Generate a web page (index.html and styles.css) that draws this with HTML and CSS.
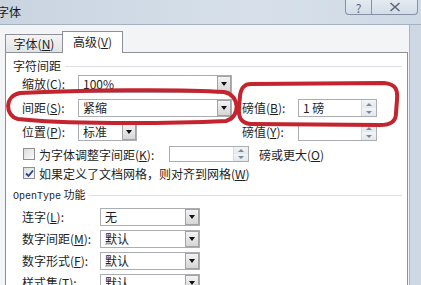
FILE: index.html
```html
<!DOCTYPE html>
<html lang="zh-CN">
<head>
<meta charset="UTF-8">
<title>字体</title>
<link rel="stylesheet" href="styles.css">
</head>
<body>
<div class="window">
  <div class="titlebar">
    <span class="title">字体</span>
    <div class="caption">
      <div class="cap-btn help">?</div>
      <div class="cap-btn close">
        <svg width="12" height="10" viewBox="0 0 12 10"><path d="M1.5 1 L10.5 9 M10.5 1 L1.5 9" stroke="#5c6778" stroke-width="1.6" fill="none"/></svg>
      </div>
    </div>
  </div>

  <div class="client">
    <div class="tabs">
      <div class="tab">字体(<u>N</u>)</div>
      <div class="tab active">高级(<u>V</u>)</div>
    </div>

    <div class="panel">
      <div class="group-head"><span>字符间距</span></div>

      <div class="spacing-grid">
        <div class="lbl">缩放(<u>C</u>):</div>
        <div class="combo"><span class="combo-text">100%</span><span class="combo-arrow"></span></div>
        <div></div><div></div><div></div>

        <div class="lbl">间距(<u>S</u>):</div>
        <div class="combo"><span class="combo-text">紧缩</span><span class="combo-arrow"></span></div>
        <div></div>
        <div class="lbl">磅值(<u>B</u>):</div>
        <div class="spin"><span class="spin-text">1 磅</span><span class="spin-btns"><i class="up"></i><i class="down"></i></span></div>

        <div class="lbl">位置(<u>P</u>):</div>
        <div class="combo short"><span class="combo-text">标准</span><span class="combo-arrow"></span></div>
        <div></div>
        <div class="lbl">磅值(<u>Y</u>):</div>
        <div class="spin"><span class="spin-text"></span><span class="spin-btns"><i class="up"></i><i class="down"></i></span></div>
      </div>

      <div class="check-row first">
        <span class="checkbox"></span>
        <span class="check-lbl">为字体调整字间距(<u>K</u>):</span>
        <div class="spin small"><span class="spin-text"></span><span class="spin-btns"><i class="up"></i><i class="down"></i></span></div>
        <span class="after">磅或更大(<u>O</u>)</span>
      </div>
      <div class="check-row">
        <span class="checkbox checked">
          <svg width="9" height="9" viewBox="0 0 9 9"><path d="M1 4.5 L3.5 7 L8 1.5" stroke="#25418a" stroke-width="1.8" fill="none"/></svg>
        </span>
        <span>如果定义了文档网格，则对齐到网格(<u>W</u>)</span>
      </div>

      <div class="group-head open"><span><b class="mono">OpenType</b> 功能</span></div>

      <div class="feature-grid">
        <div class="lbl">连字(<u>L</u>):</div>
        <div class="combo"><span class="combo-text">无</span><span class="combo-arrow"></span></div>
        <div class="lbl">数字间距(<u>M</u>):</div>
        <div class="combo"><span class="combo-text">默认</span><span class="combo-arrow"></span></div>
        <div class="lbl">数字形式(<u>F</u>):</div>
        <div class="combo"><span class="combo-text">默认</span><span class="combo-arrow"></span></div>
        <div class="lbl">样式集(<u>T</u>):</div>
        <div class="combo"><span class="combo-text">默认</span><span class="combo-arrow"></span></div>
      </div>
    </div>
  </div>

  <!-- red hand-drawn marks over the dialog -->
  <svg class="marks" width="421" height="285" viewBox="0 0 421 285">
    <path d="M20 93 C80 90 180 89 224 92 C240 95 241 117 226 121 C160 124 60 124 18 119 C5 116 4 96 20 93 Z" stroke="#c3242e" stroke-width="4" fill="none"/>
    <path d="M251 84 L384 83 C396 84 398 90 397 100 L396 113 C396 122 390 125 380 125 L252 124 C242 124 238 118 239 108 L240 96 C241 88 244 84 251 84 Z" stroke="#c3242e" stroke-width="4" fill="none"/>
  </svg>
</div>
</body>
</html>
```

FILE: styles.css
```css
body {
  margin: 0;
  width: 421px;
  height: 285px;
  overflow: hidden;
  font-family: "Noto Sans CJK SC", "Noto Sans", sans-serif;
  font-size: 12px;
  color: #1e1e1e;
  background-color: #cdd8e4;
}
u {
  text-decoration-thickness: 1px;
  text-underline-offset: 1px;
}
.window {
  position: relative;
  height: 285px;
}
.titlebar {
  height: 24px;
  display: flex;
  align-items: flex-start;
  background: linear-gradient(90deg, #c9d4e1, #d7e0ea 60%, #cfd9e5);
  border-bottom: 1px solid #a4b1c1;
}
.title {
  line-height: 24px;
  margin-left: -3px;
  font-size: 12px;
  color: #1a1a1a;
}
.caption {
  margin-left: auto;
  margin-right: 3px;
  display: flex;
}
.cap-btn {
  height: 15px;
  box-sizing: border-box;
  border: 1px solid #8592a3;
  border-top: none;
  background: linear-gradient(#e4eaf1, #d3dce7);
  display: flex;
  align-items: center;
  justify-content: center;
  color: #5c6778;
  font-size: 12px;
  line-height: 13px;
}
.cap-btn.help {
  width: 27px;
  border-radius: 0 0 0 4px;
}
.cap-btn.close {
  width: 46px;
  border-left: none;
  border-radius: 0 0 4px 0;
}
.client {
  height: 260px;
  margin-right: 11px;
  background-color: #f3f4f6;
  border-right: 1px solid #a9b5c3;
}
.tabs {
  display: flex;
  align-items: flex-end;
  padding: 6px 0 0 5px;
  height: 21px;
}
.tab {
  height: 18px;
  width: 58px;
  box-sizing: border-box;
  border: 1px solid #8d9099;
  border-bottom: none;
  background: linear-gradient(#f4f4f4, #e2e3e5);
  text-align: center;
  line-height: 17px;
}
.tab.active {
  height: 22px;
  width: 61px;
  margin-left: -1px;
  margin-bottom: -1px;
  background: #fff;
  line-height: 19px;
  position: relative;
}
.panel {
  margin-left: 5px;
  width: 403px;
  height: 240px;
  box-sizing: border-box;
  border: 1px solid #8d9099;
  background-color: #fff;
}
.group-head {
  display: flex;
  align-items: center;
  height: 16px;
  margin-top: 5px;
  padding-left: 7px;
  padding-right: 5px;
  line-height: 16px;
}
.group-head::after {
  content: "";
  flex: 1;
  height: 1px;
  margin-left: 4px;
  background-color: #dcdfe3;
}
.group-head.open {
  margin-top: 6px;
  font-size: 11px;
}
.mono {
  font-family: "Liberation Mono", monospace;
  font-weight: normal;
  font-size: 10px;
}
.spacing-grid {
  display: grid;
  grid-template-columns: 56px 154px 10px 56px 79px;
  grid-auto-rows: 18px;
  row-gap: 6px;
  margin-top: 1px;
  padding-left: 16px;
}
.lbl {
  line-height: 18px;
  white-space: nowrap;
}
.combo {
  display: flex;
  height: 18px;
  box-sizing: border-box;
  border: 1px solid #abadb3;
  background-color: #fff;
}
.combo.short {
  width: 59px;
}
.combo-text {
  flex: 1;
  padding-left: 4px;
  line-height: 16px;
}
.combo-arrow {
  width: 14px;
  box-sizing: border-box;
  border: 1px solid #a3a3a3;
  margin: 0;
  background: linear-gradient(#f3f3f3, #d6d6d6);
  display: flex;
  align-items: center;
  justify-content: center;
}
.combo-arrow::before {
  content: "";
  border-left: 3px solid transparent;
  border-right: 3px solid transparent;
  border-top: 4px solid #111;
}
.spin {
  display: flex;
  height: 18px;
  box-sizing: border-box;
  border: 1px solid #abadb3;
  background-color: #fff;
}
.spin-text {
  flex: 1;
  padding-left: 4px;
  line-height: 16px;
}
.spin-btns {
  width: 14px;
  display: flex;
  flex-direction: column;
  border-left: 1px solid #d5dbe2;
}
.spin-btns i {
  flex: 1;
  display: flex;
  align-items: center;
  justify-content: center;
  background: linear-gradient(#f2f5f8, #e2e8ee);
}
.spin-btns i.up::before {
  content: "";
  border-left: 3px solid transparent;
  border-right: 3px solid transparent;
  border-bottom: 3px solid #7d8896;
}
.spin-btns i.down::before {
  content: "";
  border-left: 3px solid transparent;
  border-right: 3px solid transparent;
  border-top: 3px solid #7d8896;
}
.check-row {
  display: flex;
  align-items: center;
  height: 16px;
  margin-top: 3px;
  padding-left: 17px;
  white-space: nowrap;
}
.check-row.first {
  margin-top: 5px;
}
.checkbox {
  width: 12px;
  height: 12px;
  box-sizing: border-box;
  border: 1px solid #8f8f8f;
  background: linear-gradient(135deg, #dcdcdc, #fbfbfb);
  margin-right: 4px;
  display: flex;
  align-items: center;
  justify-content: center;
}
.check-lbl {
  width: 130px;
}
.spin.small {
  width: 80px;
  height: 16px;
}
.after {
  margin-left: 10px;
}
.feature-grid {
  display: grid;
  grid-template-columns: 78px 100px;
  grid-auto-rows: 18px;
  row-gap: 4px;
  margin-top: 5px;
  padding-left: 16px;
}
.marks {
  position: absolute;
  left: 0;
  top: 0;
  pointer-events: none;
}
```
